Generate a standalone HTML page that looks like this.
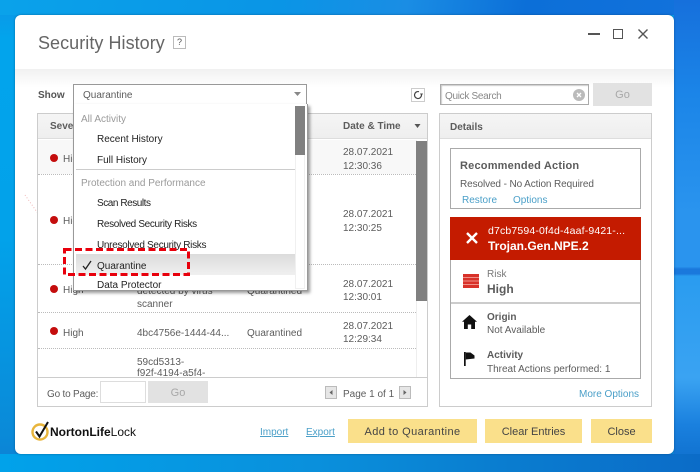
<!DOCTYPE html>
<html><head><meta charset="utf-8"><style>
html,body{margin:0;padding:0;width:700px;height:472px;overflow:hidden}
body{position:relative;font-family:"Liberation Sans",sans-serif;font-size:10px;color:#5c5c5c;background:#02a2ea}
div,span,svg{position:absolute}
#w{left:0;top:0;width:700px;height:472px;overflow:hidden;filter:blur(.3px);background:linear-gradient(180deg,#0d95e6 0,#02a4ec 8%,#02a2ea 50%,#0a8ad8 92%,#0d7fd4 100%)}
.t{white-space:nowrap;line-height:14px;height:14px;margin-top:4px}
.d{color:#222}
.g{color:#9a9a9a}
.b{font-weight:bold}
.l{color:#4a9fc8}
.dot{width:8px;height:8px;border-radius:50%;background:#c40d0d}
.hl{height:0;border-top:1px dotted #bbb}
.btn{background:#fae08b;color:#444;text-align:center;font-size:11px;line-height:27px;top:419px;height:24px}
.gbtn{background:#e2e2e2;color:#a8a8a8;text-align:center;font-size:11px}
</style></head><body><div id="w">
<div style="left:0;top:0;width:700px;height:15px;background:linear-gradient(100deg,#0aa2ea 0,#0a95e6 40%,#1a8de4 58%,#0c6fd8 75%,#1272dc 100%)"></div>
<div style="left:674px;top:0;width:26px;height:472px;background:linear-gradient(180deg,#1670dc 0,#1b85e8 20%,#2a94ee 45%,#2a94ee 56.500%,#1a78dc 57%,#1a78dc 58%,#2a9cf0 58.500%,#3aa3f2 80%,#1a80de 90%,#0c6cca 100%)"></div>
<div style="left:0;top:454px;width:700px;height:18px;background:linear-gradient(90deg,#01a2ea 0,#0a90dc 45%,#0a7ed0 70%,#0b6cc8 100%)"></div>

<div style="left:15px;top:15px;width:659px;height:439px;background:#fff;border-radius:6px;overflow:hidden;box-shadow:0 0 2px rgba(0,50,90,.5)">
<div style="left:0;top:54px;width:659px;height:18px;background:linear-gradient(180deg,#f1f1f1,#fff)"></div>
<svg style="left:5px;top:175px" width="60" height="70"><path d="M5 5L45 62" stroke="#f0b8b8" stroke-width="1" stroke-dasharray="1 2" fill="none"/></svg>
</div>

<div class="t" style="left:38px;top:31px;height:24px;line-height:24px;font-size:18px;color:#666;letter-spacing:.05px;margin-top:0">Security History</div>
<div style="left:173px;top:36px;width:11px;height:11px;border:1px solid #bbb;font-size:9px;line-height:11px;text-align:center;color:#555">?</div>

<div style="left:588px;top:33px;width:12px;height:2px;background:#555"></div>
<div style="left:613px;top:29px;width:8px;height:8px;border:1.500px solid #555"></div>
<svg style="left:637px;top:28px" width="12" height="12"><path d="M1.500 1.500L10.500 10.500M10.500 1.500L1.500 10.500" stroke="#555" stroke-width="1.400" fill="none"/></svg>

<div class="t b" style="left:38px;top:85px;color:#555">Show</div>

<!-- table -->
<div style="left:37px;top:113px;width:389px;height:292px;border:1px solid #ccc;background:#fff"></div>
<div style="left:38px;top:114px;width:389px;height:24px;background:linear-gradient(180deg,#f5f5f5,#eee);border-bottom:1px solid #ddd"></div>
<div class="t b" style="left:50px;top:116px">Severity</div>
<div class="t b" style="left:343px;top:116px">Date &amp; Time</div>
<svg style="left:414px;top:124px" width="7" height="5"><path d="M0.500 0H6.500L3.500 4Z" fill="#555"/></svg>
<div style="left:38px;top:140px;width:378px;height:34px;background:#f8f8f8"></div>
<div class="hl" style="left:38px;top:174px;width:378px"></div>
<div class="hl" style="left:38px;top:264px;width:378px"></div>
<div class="hl" style="left:38px;top:312px;width:378px"></div>
<div class="hl" style="left:38px;top:348px;width:378px"></div>
<div style="left:416px;top:140px;width:11px;height:237px;background:#fff;border-left:1px solid #eee;box-sizing:border-box"></div>
<div style="left:416px;top:141px;width:11px;height:160px;background:#808080"></div>

<div class="dot" style="left:50px;top:154px"></div>
<div class="t" style="left:63px;top:149px">High</div>
<div class="dot" style="left:50px;top:216px"></div>
<div class="t" style="left:63px;top:211px">High</div>
<div class="dot" style="left:50px;top:285px"></div>
<div class="t" style="left:63px;top:280px">High</div>
<div class="dot" style="left:50px;top:327px"></div>
<div class="t" style="left:63px;top:323px">High</div>

<div class="t" style="left:137px;top:281px">detected by virus</div>
<div class="t" style="left:137px;top:294px">scanner</div>
<div class="t" style="left:247px;top:281px">Quarantined</div>
<div class="t" style="left:137px;top:323px">4bc4756e-1444-44...</div>
<div class="t" style="left:247px;top:323px">Quarantined</div>
<div class="t" style="left:137px;top:352px">59cd5313-</div>
<div style="left:38px;top:360px;width:378px;height:17px;overflow:hidden"><div class="t" style="left:99px;top:3px;margin-top:4px">f92f-4194-a5f4-</div></div>

<div class="t" style="left:343px;top:142px">28.07.2021</div>
<div class="t" style="left:343px;top:156px">12:30:36</div>
<div class="t" style="left:343px;top:204px">28.07.2021</div>
<div class="t" style="left:343px;top:218px">12:30:25</div>
<div class="t" style="left:343px;top:274px">28.07.2021</div>
<div class="t" style="left:343px;top:287px">12:30:01</div>
<div class="t" style="left:343px;top:316px">28.07.2021</div>
<div class="t" style="left:343px;top:329px">12:29:34</div>

<!-- table footer -->
<div style="left:38px;top:377px;width:389px;height:28px;background:#fff;border-top:1px solid #ccc"></div>
<div class="t" style="left:47px;top:384px;letter-spacing:-.2px">Go to Page:</div>
<div style="left:100px;top:381px;width:44px;height:20px;border:1px solid #ddd;background:#fff"></div>
<div class="gbtn" style="left:148px;top:381px;width:60px;height:22px;line-height:24px">Go</div>
<div style="left:325px;top:386px;width:10px;height:11px;border:1px solid #bbb;background:#e6e6e6"></div>
<svg style="left:328px;top:389px" width="6" height="7"><path d="M4.500 1V6L1.500 3.500Z" fill="#666"/></svg>
<div class="t" style="left:343px;top:384px">Page 1 of 1</div>
<div style="left:399px;top:386px;width:10px;height:11px;border:1px solid #bbb;background:#e6e6e6"></div>
<svg style="left:402px;top:389px" width="6" height="7"><path d="M1.500 1V6L4.500 3.500Z" fill="#666"/></svg>

<!-- select -->
<div style="left:73px;top:84px;width:232px;height:19px;border:1px solid #999;background:#fff"></div>
<div class="t" style="left:83px;top:85px">Quarantine</div>
<svg style="left:294px;top:92px" width="7" height="5"><path d="M0 0H7L3.500 4Z" fill="#888"/></svg>

<!-- dropdown -->
<div style="left:73px;top:104px;width:233px;height:186px;border:1px solid #999;border-top:0;background:#fff;box-shadow:2px 2px 3px rgba(0,0,0,.4)"></div>
<div style="left:295px;top:106px;width:10px;height:183px;background:#fff;border:1px solid #f0f0f0;box-sizing:border-box"></div>
<div style="left:295px;top:106px;width:10px;height:49px;background:#808080"></div>
<div style="left:76px;top:169px;width:219px;height:1px;background:#ccc"></div>
<div style="left:76px;top:254px;width:219px;height:21px;background:linear-gradient(180deg,#dcdcdc,#f0f0f0)"></div>
<div class="t g" style="left:81px;top:109px">All Activity</div>
<div class="t d" style="left:97px;top:129px">Recent History</div>
<div class="t d" style="left:97px;top:150px">Full History</div>
<div class="t g" style="left:81px;top:173px">Protection and Performance</div>
<div class="t d" style="left:97px;top:193px;letter-spacing:-.45px">Scan Results</div>
<div class="t d" style="left:97px;top:214px;letter-spacing:-.35px">Resolved Security Risks</div>
<div class="t d" style="left:97px;top:235px;letter-spacing:-.3px">Unresolved Security Risks</div>
<div class="t d" style="left:97px;top:256px">Quarantine</div>
<div style="left:74px;top:276px;width:221px;height:15px;overflow:hidden"><div class="t d" style="left:23px;top:0;margin-top:3px">Data Protector</div></div>
<svg style="left:82px;top:260px" width="10" height="11"><path d="M1 6L3.500 9L9 1" stroke="#222" stroke-width="1.300" fill="none"/></svg>

<!-- red dashed -->
<svg style="left:62px;top:247px" width="129" height="30"><rect x="2.500" y="2.500" width="124" height="25" fill="none" stroke="#e8000c" stroke-width="3" stroke-dasharray="7 3.500"/></svg>

<!-- refresh -->
<div style="left:411px;top:88px;width:12px;height:12px;border:1px solid #ccc;background:#fff"></div>
<svg style="left:411px;top:88px" width="14" height="14"><path d="M10.500 7A3.500 3.500 0 1 1 8 3.700" stroke="#444" stroke-width="1.200" fill="none"/><path d="M9 5.500L12 5.500L10.500 8Z" fill="#444"/></svg>

<!-- search -->
<div style="left:440px;top:84px;width:147px;height:19px;border:1px solid #aaa;box-shadow:inset 1px 1px 1px #ccc;background:#fff"></div>
<div class="t" style="left:445px;top:86px;color:#888;letter-spacing:-.3px">Quick Search</div>
<div style="left:573px;top:89px;width:12px;height:12px;border-radius:50%;background:#bbb"></div>
<svg style="left:573px;top:89px" width="12" height="12"><path d="M4 4L8 8M8 4L4 8" stroke="#fff" stroke-width="1.300"/></svg>
<div class="gbtn" style="left:593px;top:83px;width:59px;height:23px;line-height:25px">Go</div>

<!-- details -->
<div style="left:439px;top:113px;width:211px;height:292px;border:1px solid #ccc;background:#fff"></div>
<div style="left:440px;top:114px;width:211px;height:24px;background:linear-gradient(180deg,#f5f5f5,#eee);border-bottom:1px solid #ddd"></div>
<div class="t b" style="left:450px;top:117px">Details</div>

<div style="left:450px;top:148px;width:189px;height:59px;border:1px solid #aaa;background:#fff"></div>
<div class="t b" style="left:460px;top:155px;font-size:11px;letter-spacing:.2px">Recommended Action</div>
<div class="t" style="left:460px;top:174px;letter-spacing:-.1px">Resolved - No Action Required</div>
<div class="t l" style="left:462px;top:190px">Restore</div>
<div class="t l" style="left:513px;top:190px">Options</div>

<div style="left:450px;top:217px;width:191px;height:43px;background:#c41b00"></div>
<svg style="left:466px;top:232px" width="12" height="12"><path d="M1 1L11 11M11 1L1 11" stroke="#fff" stroke-width="2.400" fill="none"/></svg>
<div class="t" style="left:488px;top:220px;color:#fff;font-size:10.500px;letter-spacing:.15px">d7cb7594-0f4d-4aaf-9421-...</div>
<div class="t b" style="left:488px;top:235px;color:#fff;font-size:12px">Trojan.Gen.NPE.2</div>

<div style="left:450px;top:260px;width:189px;height:118px;border:1px solid #aaa;border-top:0;background:#fff"></div>
<div style="left:451px;top:302px;width:189px;height:2px;background:#ccc"></div>
<svg style="left:463px;top:274px" width="16" height="14"><rect width="16" height="14" fill="#d8322a"/><path d="M0 3.500H16M0 7H16M0 10.500H16" stroke="#f6b0a8" stroke-width=".8"/></svg>
<div class="t" style="left:487px;top:264px;color:#777">Risk</div>
<div class="t b" style="left:487px;top:278px;font-size:12px">High</div>

<svg style="left:462px;top:315px" width="15" height="14"><path d="M7.500 0L15 6.800H13V14H9.200V9.500H5.800V14H2V6.800H0Z" fill="#111"/></svg>
<div class="t b" style="left:487px;top:307px">Origin</div>
<div class="t" style="left:487px;top:320px">Not Available</div>
<svg style="left:464px;top:352px" width="11" height="14"><path d="M0 0H1.700V14H0Z" fill="#111"/><path d="M1.700 0.500H6.500L10.500 3.500V6.500L1.700 7.500Z" fill="#111"/></svg>
<div class="t b" style="left:487px;top:345px">Activity</div>
<div class="t" style="left:487px;top:359px">Threat Actions performed: 1</div>
<div class="t l" style="left:579px;top:384px">More Options</div>

<!-- footer -->
<svg style="left:30px;top:421px" width="24" height="22"><circle cx="10" cy="11" r="7.500" fill="none" stroke="#e8b53c" stroke-width="2.400"/><path d="M6 10.500L9.500 15.500L18 1" stroke="#111" stroke-width="2" fill="none"/></svg>
<div class="t" style="left:50px;top:425px;font-size:12px;color:#111;margin-top:0"><b>NortonLife</b>Lock</div>
<div class="t l" style="left:260px;top:422px;text-decoration:underline">Import</div>
<div class="t l" style="left:306px;top:422px;text-decoration:underline">Export</div>
<div class="btn" style="left:348px;width:129px;letter-spacing:.4px">Add to Quarantine</div>
<div class="btn" style="left:485px;width:97px">Clear Entries</div>
<div class="btn" style="left:591px;width:61px">Close</div>
</div></body></html>
